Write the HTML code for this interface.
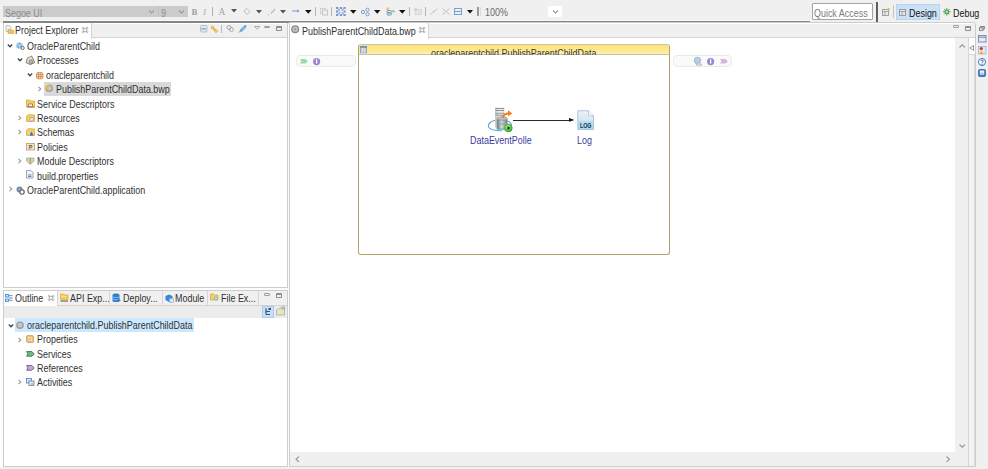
<!DOCTYPE html>
<html><head><meta charset="utf-8">
<style>
*{margin:0;padding:0;box-sizing:border-box}
html,body{width:988px;height:469px;overflow:hidden;background:#f0f0f0;font-family:"Liberation Sans",sans-serif;font-size:10.4px;color:#303030}
.a{position:absolute}
.t{position:absolute;white-space:nowrap;line-height:12px;font-size:10.4px;transform:scaleX(0.86);transform-origin:0 0}
svg{position:absolute;overflow:visible}
.ch{fill:none;stroke:#444;stroke-width:1.3}
.cr{fill:none;stroke:#9a9a9a;stroke-width:1.1}
.dd{fill:#111}
.sep{position:absolute;width:1px;background:#b4b4b4}
</style></head><body>

<div class="a" style="left:0;top:23px;width:289px;height:444px;background:#fcfcfc"></div>
<!-- ===== TOP TOOLBAR ===== -->
<div class="a" style="left:3px;top:6px;width:155px;height:11px;background:#cbcbcb"></div>
<div class="t" style="left:5px;top:7.5px;color:#8c8c8c">Segoe UI</div>
<svg style="left:148px;top:10px" width="8" height="5"><polyline points="1,0.5 3.5,3 6,0.5" class="cr"/></svg>
<div class="a" style="left:158px;top:6px;width:30px;height:11px;background:#cbcbcb;border-left:1px solid #c0c0c0"></div>
<div class="t" style="left:161px;top:7.5px;color:#8c8c8c">9</div>
<svg style="left:178px;top:10px" width="8" height="5"><polyline points="1,0.5 3.5,3 6,0.5" class="cr"/></svg>

<div class="a" style="left:191.5px;top:7px;font:bold 9px 'Liberation Serif',serif;color:#a0a0a0">B</div>
<div class="a" style="left:203px;top:7px;font:italic 9px 'Liberation Serif',serif;color:#ababab">I</div>
<div class="sep" style="left:212px;top:7px;height:9px;background:#b0b0b0"></div>
<div class="a" style="left:218.5px;top:7px;font:9.5px 'Liberation Serif',serif;color:#a4a4a4">A</div>
<svg style="left:231px;top:9px" width="7" height="4"><polygon points="0,0 6,0 3,3.5" fill="#555"/></svg>
<svg style="left:243px;top:8px" width="8" height="7"><path d="M1,3 L4,0.5 L7,3.5 L4,6.5 Z" fill="none" stroke="#bdbdbd" stroke-width="1"/></svg>
<svg style="left:256px;top:9.5px" width="7" height="4"><polygon points="0,0 6,0 3,3.5" fill="#555"/></svg>
<svg style="left:267px;top:8px" width="9" height="7"><path d="M1,6.5 L2,6.5 M4,5.5 L8,1" stroke="#bcbcbc" stroke-width="1.3" fill="none"/></svg>
<svg style="left:280px;top:9.5px" width="7" height="4"><polygon points="0,0 6,0 3,3.5" fill="#555"/></svg>
<svg style="left:292px;top:9px" width="8" height="4"><path d="M0,2 L6,2" stroke="#86a6d6" stroke-width="1.1"/><polygon points="5,0.3 8,2 5,3.7" fill="#86a6d6"/></svg>
<svg style="left:304.5px;top:9.5px" width="7" height="4"><polygon points="0,0 6.5,0 3.25,3.8" class="dd"/></svg>
<div class="sep" style="left:315px;top:7px;height:9px"></div>
<svg style="left:320px;top:8px" width="8" height="7"><rect x="0.5" y="0.5" width="5" height="5" fill="none" stroke="#cfcfcf"/><rect x="2.5" y="2" width="5" height="5" fill="#eee" stroke="#c8c8c8"/></svg>
<div class="sep" style="left:331px;top:7px;height:9px"></div>
<svg style="left:336px;top:7px" width="10" height="9"><g fill="#7896c6"><rect x="0" y="0" width="2.2" height="2"/><rect x="3.8" y="0" width="2.2" height="2"/><rect x="7.5" y="0" width="2.2" height="2"/><rect x="0" y="3.5" width="2.2" height="2"/><rect x="7.5" y="3.5" width="2.2" height="2"/><rect x="0" y="7" width="2.2" height="2"/><rect x="3.8" y="7" width="2.2" height="2"/><rect x="7.5" y="7" width="2.2" height="2"/></g><path d="M1,1 L8.5,8 M8.5,1 L1,8" stroke="#8aa7d2" stroke-width="1.6" opacity="0.85"/><circle cx="4.9" cy="4.5" r="1.2" fill="#f0f4fa"/></svg>
<svg style="left:349.5px;top:9.5px" width="7" height="4"><polygon points="0,0 6.5,0 3.25,3.8" class="dd"/></svg>
<svg style="left:361px;top:7.5px" width="9" height="8"><g fill="none" stroke="#7b9fd0" stroke-width="1"><circle cx="2" cy="4" r="1.6"/><circle cx="6.5" cy="1.8" r="1.6"/><circle cx="6.5" cy="6.2" r="1.6"/></g></svg>
<svg style="left:374px;top:9.5px" width="7" height="4"><polygon points="0,0 6.5,0 3.25,3.8" class="dd"/></svg>
<svg style="left:386px;top:7px" width="9" height="9"><circle cx="1.8" cy="1.6" r="1.4" fill="#e8c25a"/><circle cx="7.3" cy="4.2" r="1.3" fill="#8fd07a"/><g fill="none" stroke="#6f93c8" stroke-width="1"><rect x="1" y="3.5" width="4.5" height="2" rx="1"/><rect x="1" y="6" width="4.5" height="2" rx="1"/></g></svg>
<svg style="left:399px;top:9.5px" width="7" height="4"><polygon points="0,0 6.5,0 3.25,3.8" class="dd"/></svg>
<div class="sep" style="left:409px;top:7px;height:9px"></div>
<svg style="left:414px;top:8px" width="8" height="7"><rect x="1.5" y="1.5" width="6" height="5" fill="#e4e4e4" stroke="#d2d2d2" stroke-width="0.8"/><circle cx="1.5" cy="1.3" r="1" fill="none" stroke="#c4c4c4" stroke-width="0.8"/></svg>
<div class="sep" style="left:425px;top:7px;height:9px"></div>
<svg style="left:430px;top:8px" width="8" height="7"><path d="M0.5,6.5 L7.5,0.5 M3,3 L5,4" stroke="#c2c2c2" stroke-width="1" fill="none"/></svg>
<svg style="left:442px;top:8px" width="8" height="7"><path d="M0.5,0.5 L7.5,6.5 M7.5,0.5 L0.5,6.5" stroke="#c2c2c2" stroke-width="1" fill="none"/></svg>
<svg style="left:454px;top:8px" width="8" height="7"><rect x="0.5" y="0.5" width="7" height="6" fill="#e6f1fb" stroke="#7f9fc6" stroke-width="1"/><path d="M0.5,3.5 L7.5,3.5" stroke="#7f9fc6" stroke-width="1"/></svg>
<svg style="left:467px;top:9.5px" width="7" height="4"><polygon points="0,0 6,0 3,3.5" class="dd"/></svg>
<div class="sep" style="left:477px;top:7px;height:9px;width:1.5px;background:#9a9a9a"></div>
<div class="sep" style="left:480px;top:7px;height:9px;background:#dcdcdc"></div>
<div class="t" style="left:485px;top:7px;color:#6a6a6a">100%</div>
<div class="a" style="left:548px;top:6px;width:14px;height:11px;background:#fff"></div>
<svg style="left:552px;top:10px" width="8" height="5"><polyline points="1,0.5 3.5,3 6,0.5" class="cr"/></svg>

<!-- toolbar dark line -->
<div class="a" style="left:3px;top:20px;width:807px;height:1px;background:#f8f8f8"></div>
<div class="a" style="left:3px;top:21px;width:807px;height:2px;background:#858585"></div>

<!-- Quick access -->
<div class="a" style="left:812px;top:3px;width:61px;height:17px;background:#fff;border:1px solid #a4a4a4;border-radius:1px"></div>
<div class="t" style="left:814px;top:7.5px;color:#7a7a7a">Quick Access</div>
<div class="a" style="left:876px;top:2px;width:1.5px;height:20px;background:#5e5e5e"></div>
<svg style="left:882px;top:8px" width="8" height="8"><rect x="0.5" y="1.5" width="6" height="6" fill="#f2ead2" stroke="#8d9bb0" stroke-width="0.9"/><path d="M0.5,3.5 L6.5,3.5 M3,3.5 L3,7.5" stroke="#8d9bb0" stroke-width="0.8"/><circle cx="6.5" cy="1.2" r="1.2" fill="#e9b940"/></svg>
<div class="a" style="left:893px;top:5px;width:1px;height:13px;background:#c4c4c4"></div>
<div class="a" style="left:896px;top:4px;width:44px;height:16px;background:#c9e0f5;border:1px solid #b5d5f2"></div>
<svg style="left:899px;top:9px" width="7" height="7"><rect x="0.5" y="0.5" width="6" height="6" fill="#efe6cc" stroke="#8797ad" stroke-width="0.9"/><path d="M0.5,2.5 L6.5,2.5 M3,2.5 L3,6.5" stroke="#8797ad" stroke-width="0.8"/></svg>
<div class="t" style="left:908.5px;top:8px;color:#151515">Design</div>
<svg style="left:942.5px;top:8px" width="8" height="8"><g fill="#4f9e5a"><circle cx="3.8" cy="3.8" r="2.4"/></g><g stroke="#4f9e5a" stroke-width="1"><path d="M3.8,0 L3.8,7.6 M0,3.8 L7.6,3.8 M1.1,1.1 L6.5,6.5 M6.5,1.1 L1.1,6.5"/></g><circle cx="3.8" cy="3.8" r="1.1" fill="#d7f0c8"/></svg>
<div class="t" style="left:952.5px;top:8px;color:#151515">Debug</div>

<!-- ===== PROJECT EXPLORER ===== -->
<div class="a" style="left:3px;top:23px;width:285px;height:265px;background:#fff;border:1px solid #cdcdcd;border-top:none"></div>
<div class="a" style="left:4px;top:24px;width:283px;height:14px;background:#f0f0f0;border-bottom:1px solid #d4d4d4"></div>
<div class="a" style="left:4px;top:23px;width:88px;height:16px;background:#fff;border-right:1px solid #d4d4d4"></div>
<svg style="left:4.5px;top:25px" width="10" height="9"><path d="M1,0.5 L4.5,0.5 L6,2 L6,6.5 L1,6.5 Z" fill="#eef2f7" stroke="#a9b6c6" stroke-width="0.8"/><path d="M3,4.5 L5.2,4.5 L6,5.3 L8.8,5.3 L8.8,8.5 L3,8.5 Z" fill="#f3c35a" stroke="#d9a13a" stroke-width="0.6" stroke-linejoin="round"/></svg>
<div class="t" style="left:15px;top:25.3px">Project Explorer</div>
<svg style="left:81.8px;top:26.8px" width="7" height="7"><g fill="none" stroke="#acacac" stroke-width="0.8"><rect x="1.6" y="1.6" width="3" height="2.8"/><circle cx="1.2" cy="1.2" r="1"/><circle cx="5" cy="1.2" r="1"/><circle cx="1.2" cy="4.8" r="1"/><circle cx="5" cy="4.8" r="1"/></g></svg>

<!-- PE toolbar -->
<svg style="left:199.5px;top:25px" width="8" height="8"><rect x="0.5" y="0.5" width="6.5" height="6.5" rx="1" fill="#dde7f1" stroke="#a9bdd3" stroke-width="0.9"/><path d="M1.5,3.8 L6,3.8" stroke="#7f9fc4" stroke-width="1.3"/><path d="M1.5,2.2 L6,2.2" stroke="#f6f9fc" stroke-width="0.8"/></svg>
<svg style="left:210px;top:24.5px" width="9" height="9"><g fill="#e6b440"><path d="M2.5,0.3 L4.7,2.5 L2.5,4.7 L0.3,2.5 Z"/><path d="M6,3.8 L8.3,6 L6,8.3 L3.8,6 Z"/></g><path d="M3,3 L5.5,5.5" stroke="#d9a030" stroke-width="1.3"/><g fill="#fbe9a8"><circle cx="2.5" cy="2.5" r="0.8"/><circle cx="6" cy="6" r="0.8"/></g></svg>
<div class="a" style="left:221px;top:24.5px;width:1px;height:8px;background:#b8b8b8"></div>
<svg style="left:226px;top:25px" width="9" height="7"><g fill="none" stroke="#a0a0a0" stroke-width="0.9"><circle cx="3" cy="2.5" r="2"/><circle cx="5.5" cy="4.5" r="2"/></g></svg>
<svg style="left:238px;top:24.5px" width="9" height="9"><path d="M2.8,5.8 L7.2,1.4" stroke="#5f9be0" stroke-width="2.6" stroke-linecap="round"/><path d="M3.5,4.8 L6.8,1.6" stroke="#d4e6fa" stroke-width="0.7"/><path d="M0.6,7.8 L2.2,5.8" stroke="#f0d050" stroke-width="1.6"/></svg>
<svg style="left:254px;top:25.5px" width="7" height="4"><polygon points="0.5,0.5 6,0.5 3.25,3" fill="none" stroke="#9a9a9a" stroke-width="0.8"/></svg>
<div class="a" style="left:264px;top:25.5px;width:6px;height:2.5px;border:1px solid #9d9d9d;border-radius:1px"></div>
<div class="a" style="left:276px;top:25.5px;width:6px;height:5px;border:1px solid #8d8d8d;border-top-width:2px;border-radius:1px"></div>

<!-- PE tree -->
<svg style="left:7px;top:43.5px" width="6" height="4"><polyline points="0.8,0.5 3,2.8 5.2,0.5" class="ch"/></svg>
<svg style="left:15.5px;top:41.5px" width="10" height="9"><path d="M0.5,1.8 L3.5,0.3 L6.5,1.8 L6.5,5.5 L3.5,7 L0.5,5.5 Z" fill="#7db3e2"/><path d="M0.5,1.8 L3.5,3.3 L6.5,1.8 M3.5,3.3 L3.5,7" stroke="#e0eef9" stroke-width="0.6" fill="none"/><circle cx="6.6" cy="6" r="1.6" fill="#fff" stroke="#666" stroke-width="1"/></svg>
<div class="t" style="left:26.5px;top:41px">OracleParentChild</div>

<svg style="left:17px;top:58px" width="6" height="4"><polyline points="0.8,0.5 3,2.8 5.2,0.5" class="ch"/></svg>
<svg style="left:25.3px;top:55.6px" width="10" height="10"><path d="M0.8,4.8 L3.8,1.3 L8.6,1.3 L8.6,8.3 L3.8,8.3 Z" fill="#efe6cf" stroke="#858585" stroke-width="1" stroke-linejoin="round" transform="rotate(-25 5 5)"/><circle cx="5.8" cy="5.6" r="1.9" fill="#a4a4a4" stroke="#777" stroke-width="0.6"/><circle cx="5.8" cy="5.6" r="0.7" fill="#e8e8e8"/></svg>
<div class="t" style="left:36.5px;top:55.4px">Processes</div>

<svg style="left:27px;top:72.5px" width="6" height="4"><polyline points="0.8,0.5 3,2.8 5.2,0.5" class="ch"/></svg>
<svg style="left:36.3px;top:71.5px" width="8" height="8"><rect x="0.5" y="0.5" width="6.5" height="6.3" rx="1.6" fill="#f6e2c8" stroke="#d08a48" stroke-width="0.8"/><path d="M0.5,2.6 L7,2.6 M0.5,4.7 L7,4.7 M2.6,0.5 L2.6,6.8 M4.9,0.5 L4.9,6.8" stroke="#cf8240" stroke-width="0.8"/></svg>
<div class="t" style="left:46px;top:69.8px">oracleparentchild</div>

<div class="a" style="left:44px;top:82px;width:127px;height:14px;background:#d9d9d9"></div>
<svg style="left:38px;top:86px" width="4" height="6"><polyline points="0.5,0.8 2.8,3 0.5,5.2" class="cr"/></svg>
<svg style="left:45px;top:84px" width="9" height="9"><circle cx="4.2" cy="4.2" r="3.8" fill="#9e9e9e"/><circle cx="4.2" cy="4.2" r="2.4" fill="#c9c9c9"/><path d="M0.5,1.5 L4,0.5 L5,3 L1.5,5.5 Z" fill="#e7c12e"/></svg>
<div class="t" style="left:55.5px;top:84.2px">PublishParentChildData.bwp</div>

<svg style="left:25.5px;top:99px" width="9" height="9"><path d="M0.5,1 L3.5,1 L4.5,2 L8.5,2 L8.5,8 L0.5,8 Z" fill="#f4cf5a" stroke="#d0a030" stroke-width="0.7"/><path d="M2.5,5 L6.5,5 L6.5,7.5 L2.5,7.5 Z" fill="#fff" stroke="#6a6a6a" stroke-width="0.7"/><path d="M1,8 L8.5,8" stroke="#c0702a" stroke-width="1"/></svg>
<div class="t" style="left:36.5px;top:98.6px">Service Descriptors</div>

<svg style="left:18px;top:114.6px" width="4" height="6"><polyline points="0.5,0.8 2.8,3 0.5,5.2" class="cr"/></svg>
<svg style="left:25.5px;top:113.5px" width="9" height="8"><path d="M0.5,2 L3,0.5 L8.5,1 L8.5,7.5 L0.5,7.5 Z" fill="#f4d067" stroke="#d5a53a" stroke-width="0.7"/><rect x="4" y="3.5" width="3.5" height="3.5" fill="#e8e8e8" stroke="#888" stroke-width="0.5"/></svg>
<div class="t" style="left:36.5px;top:113px">Resources</div>

<svg style="left:18px;top:129px" width="4" height="6"><polyline points="0.5,0.8 2.8,3 0.5,5.2" class="cr"/></svg>
<svg style="left:25.5px;top:128px" width="9" height="8"><path d="M0.5,2 L3,0.5 L8.5,1 L8.5,7.5 L0.5,7.5 Z" fill="#f4d067" stroke="#d5a53a" stroke-width="0.7"/><path d="M3.5,7.5 L5.5,3.5 L7.5,7.5 Z" fill="#2f6fd0"/></svg>
<div class="t" style="left:36.5px;top:127.4px">Schemas</div>

<svg style="left:25.5px;top:142.5px" width="9" height="8"><rect x="0.5" y="0.5" width="8" height="6.5" fill="#f1e3cc" stroke="#b89a70" stroke-width="0.8"/><text x="2.8" y="6" font-size="5.5" font-family="Liberation Sans" font-weight="bold" fill="#6a4a20">P</text></svg>
<div class="t" style="left:36.5px;top:141.8px">Policies</div>

<svg style="left:18px;top:158px" width="4" height="6"><polyline points="0.5,0.8 2.8,3 0.5,5.2" class="cr"/></svg>
<svg style="left:25.5px;top:156.5px" width="9" height="8"><path d="M0.5,1 L8,1 L8,4 L4.25,7.5 L0.5,4 Z" fill="#f0d070" stroke="#8fb0d0" stroke-width="0.8"/><path d="M4.25,1 L4.25,7" stroke="#6f9fd0" stroke-width="1"/></svg>
<div class="t" style="left:36.5px;top:156.2px">Module Descriptors</div>

<svg style="left:26px;top:170px" width="8" height="9"><path d="M0.5,0.5 L5,0.5 L7,2.5 L7,8 L0.5,8 Z" fill="#f4f4f4" stroke="#8a8fa0" stroke-width="0.8"/><path d="M2,5 L5.5,5 M2,6.5 L5.5,6.5" stroke="#3a6fb5" stroke-width="0.8"/></svg>
<div class="t" style="left:36.5px;top:170.6px">build.properties</div>

<svg style="left:8.5px;top:186.2px" width="4" height="6"><polyline points="0.5,0.8 2.8,3 0.5,5.2" class="cr"/></svg>
<svg style="left:16px;top:185.5px" width="9" height="9"><circle cx="3.5" cy="3.5" r="3" fill="#5b8fc8"/><circle cx="3.5" cy="3.5" r="1.2" fill="#f0b050"/><circle cx="6" cy="6" r="2.2" fill="#fff" stroke="#555" stroke-width="1.1"/></svg>
<div class="t" style="left:26.5px;top:185px">OracleParentChild.application</div>

<!-- ===== OUTLINE ===== -->
<div class="a" style="left:3px;top:290px;width:285px;height:177px;background:#fff;border:1px solid #cdcdcd"></div>
<div class="a" style="left:4px;top:291px;width:283px;height:15px;background:#f0f0f0;border-bottom:1px solid #d4d4d4"></div>
<div class="a" style="left:4px;top:291px;width:54px;height:16px;background:#fff;border-right:1px solid #d4d4d4"></div>
<div class="a" style="left:4px;top:306px;width:283px;height:12px;background:#ececec"></div>
<svg style="left:5px;top:293.5px" width="8" height="9"><g fill="#cfe3f7" stroke="#3d7fd0" stroke-width="0.8"><rect x="0.5" y="0.5" width="3" height="2.5"/><rect x="0.5" y="5" width="3" height="2.5"/></g><path d="M4,1.7 L7.5,1.7 M4,4 L7.5,4 M4,6.2 L7.5,6.2" stroke="#3d7fd0" stroke-width="0.9"/></svg>
<div class="t" style="left:15px;top:293px">Outline</div>
<svg style="left:48.2px;top:294.6px" width="7" height="7"><g fill="none" stroke="#acacac" stroke-width="0.8"><rect x="1.6" y="1.6" width="3" height="2.8"/><circle cx="1.2" cy="1.2" r="1"/><circle cx="5" cy="1.2" r="1"/><circle cx="1.2" cy="4.8" r="1"/><circle cx="5" cy="4.8" r="1"/></g></svg>
<svg style="left:60px;top:293.3px" width="10" height="10"><path d="M0.5,1 L3.5,1 L4.5,2 L8,2 L8,6.3 L0.5,6.3 Z" fill="#f4cf5a" stroke="#d8a838" stroke-width="0.7"/><path d="M1.5,3.5 L6,3.5" stroke="#fbe6a0" stroke-width="0.8"/><path d="M0.5,8 L8,8" stroke="#4a5f80" stroke-width="1.1"/><rect x="3.5" y="6.8" width="1.6" height="2.3" fill="#e89a30"/></svg>
<div class="t" style="left:69.5px;top:293px">API Exp...</div>
<div class="a" style="left:109px;top:291px;width:1px;height:14px;background:#d6d6d6"></div>
<svg style="left:111.5px;top:293px" width="10" height="10"><path d="M0.5,2 C0.5,0 7.5,0 7.5,2 L7.5,8 C7.5,9.3 0.5,9.3 0.5,8 Z" fill="#2f7fd0"/><path d="M0.5,3.8 C1,4.8 7,4.8 7.5,3.8 M0.5,6 C1,7 7,7 7.5,6" stroke="#a8d0f4" stroke-width="0.7" fill="none"/><path d="M6,5.5 L9,7.2 L6,9 Z" fill="#2f7fd0"/></svg>
<div class="t" style="left:123px;top:293px">Deploy...</div>
<div class="a" style="left:162px;top:291px;width:1px;height:14px;background:#d6d6d6"></div>
<svg style="left:164.5px;top:293.5px" width="9" height="9"><path d="M0.5,2 L4,0.5 L7.5,2 L7.5,6 L4,8 L0.5,6 Z" fill="#3a86d6"/><rect x="4.5" y="4.5" width="4" height="4" fill="#d6e6f6" stroke="#7fa8d6" stroke-width="0.6"/></svg>
<div class="t" style="left:175px;top:293px">Module</div>
<div class="a" style="left:207px;top:291px;width:1px;height:14px;background:#d6d6d6"></div>
<svg style="left:210px;top:293px" width="9" height="9"><path d="M0.5,1 L3.5,1 L4.5,2 L8,2 L8,7 L0.5,7 Z" fill="#f4d067" stroke="#d5a53a" stroke-width="0.7"/><circle cx="6" cy="5.5" r="1.6" fill="#cfeef8" stroke="#3aa0c8" stroke-width="0.6"/></svg>
<div class="t" style="left:220.5px;top:293px">File Ex...</div>
<div class="a" style="left:258px;top:291px;width:1px;height:14px;background:#d6d6d6"></div>
<div class="a" style="left:264px;top:293px;width:6px;height:2.5px;border:1px solid #9d9d9d;border-radius:1px"></div>
<div class="a" style="left:276px;top:293px;width:6px;height:5px;border:1px solid #8d8d8d;border-top-width:2px;border-radius:1px"></div>
<!-- outline toolbar -->
<div class="a" style="left:262px;top:306px;width:12px;height:12px;background:#c8e0f6;border:1px solid #a9cbed"></div>
<svg style="left:265px;top:308px" width="7" height="8"><path d="M1,0.5 L1,6.5 M1,3.5 L5,3.5 M1,6.5 L5,6.5" stroke="#2f4f8f" stroke-width="1.2" fill="none"/><rect x="3.5" y="0" width="2.5" height="2" fill="#2f4f8f"/></svg>
<svg style="left:276px;top:306px" width="10" height="10"><path d="M0.5,4 L4,2 L8.5,2 L8.5,9 L0.5,9 Z" fill="#e8e4c8" stroke="#a6a6a6" stroke-width="0.7"/><rect x="5.5" y="0.5" width="3.5" height="3" fill="#7fb0c8"/><rect x="6" y="1" width="2" height="2" fill="#e8c850"/></svg>

<!-- outline tree -->
<div class="a" style="left:15px;top:318px;width:179px;height:14px;background:#cce8ff"></div>
<svg style="left:7.5px;top:323.5px" width="6" height="4"><polyline points="0.8,0.5 3,2.8 5.2,0.5" class="ch"/></svg>
<svg style="left:15.5px;top:320.5px" width="9" height="9"><circle cx="4" cy="4.2" r="3.8" fill="#9a9a9a"/><circle cx="4" cy="4.2" r="2.4" fill="#c8c8c8"/></svg>
<div class="t" style="left:26.5px;top:320px">oracleparentchild.PublishParentChildData</div>
<svg style="left:18.3px;top:336.5px" width="4" height="6"><polyline points="0.5,0.8 2.8,3 0.5,5.2" class="cr"/></svg>
<svg style="left:26px;top:334.5px" width="8" height="8"><rect x="0.5" y="0.5" width="7" height="7" rx="1.2" fill="#e9bf78" stroke="#c9994e" stroke-width="0.7"/><path d="M2,2 L6,2 L6,5.5 L2,5.5 Z" fill="#f6e2bc"/><path d="M2.5,4.5 L5.5,3" stroke="#c08838" stroke-width="0.7"/></svg>
<div class="t" style="left:36.5px;top:334px">Properties</div>
<svg style="left:25.5px;top:350.8px" width="9" height="6"><path d="M0.6,0.6 L5.8,0.6 L8.2,2.9 L5.8,5.2 L0.6,5.2 L2,2.9 Z" fill="#6cc07e" stroke="#3e5a44" stroke-width="0.8"/></svg>
<div class="t" style="left:36.5px;top:349px">Services</div>
<svg style="left:25.5px;top:365.2px" width="9" height="6"><path d="M0.6,0.6 L5.8,0.6 L8.2,2.9 L5.8,5.2 L0.6,5.2 L2,2.9 Z" fill="#d0a8de" stroke="#5a4a62" stroke-width="0.8"/></svg>
<div class="t" style="left:36.5px;top:363px">References</div>
<svg style="left:18.3px;top:379px" width="4" height="6"><polyline points="0.5,0.8 2.8,3 0.5,5.2" class="cr"/></svg>
<svg style="left:26px;top:378px" width="9" height="8"><rect x="0.5" y="0.5" width="5" height="4.5" fill="#d8e8f8" stroke="#4a7fc0" stroke-width="0.8"/><rect x="3" y="3" width="5" height="4.5" fill="#e6f0fa" stroke="#4a7fc0" stroke-width="0.8"/><rect x="5" y="5" width="2.5" height="2" fill="#e8c040"/></svg>
<div class="t" style="left:36.5px;top:377px">Activities</div>

<!-- ===== EDITOR ===== -->
<div class="a" style="left:289px;top:22px;width:687px;height:445px;background:#fff;border:1px solid #cdcdcd;border-top-right-radius:3px"></div>
<div class="a" style="left:290px;top:24px;width:685px;height:14px;background:#f0f0f0;border-bottom:1px solid #d4d4d4"></div>
<div class="a" style="left:290px;top:23px;width:139px;height:16px;background:#fff;border-right:1px solid #d4d4d4"></div>
<svg style="left:291px;top:25px" width="9" height="9"><circle cx="4.2" cy="4.2" r="4" fill="#8a8a8a"/><circle cx="4.2" cy="4.2" r="2.6" fill="#cacaca"/><circle cx="4.2" cy="4.2" r="1.2" fill="#9a9a9a"/></svg>
<div class="t" style="left:301.5px;top:26px">PublishParentChildData.bwp</div>
<svg style="left:419px;top:26.8px" width="7" height="7"><g fill="none" stroke="#acacac" stroke-width="0.8"><rect x="1.6" y="1.6" width="3" height="2.8"/><circle cx="1.2" cy="1.2" r="1"/><circle cx="5" cy="1.2" r="1"/><circle cx="1.2" cy="4.8" r="1"/><circle cx="5" cy="4.8" r="1"/></g></svg>
<div class="a" style="left:953px;top:25px;width:6px;height:2.5px;border:1px solid #9d9d9d;border-radius:1px"></div>
<div class="a" style="left:965px;top:25.5px;width:6px;height:5px;border:1px solid #8d8d8d;border-top-width:2px;border-radius:1px"></div>

<!-- scrollbars -->
<div class="a" style="left:955px;top:38px;width:13px;height:415px;background:#f0f0f0"></div>
<svg style="left:958.5px;top:44px" width="7" height="4"><polyline points="0.5,3.5 3.25,0.8 6,3.5" class="cr"/></svg>
<svg style="left:958.5px;top:443.5px" width="7" height="4"><polyline points="0.5,0.5 3.25,3.2 6,0.5" class="cr"/></svg>
<div class="a" style="left:290px;top:452px;width:665px;height:14px;background:#f0f0f0"></div>
<svg style="left:295px;top:456px" width="5" height="7"><polyline points="4,0.5 1,3.25 4,6" class="cr"/></svg>
<svg style="left:945.5px;top:456px" width="5" height="7"><polyline points="0.5,0.5 3.5,3.25 0.5,6" class="cr"/></svg>
<div class="a" style="left:955px;top:452px;width:13px;height:14px;background:#f0f0f0"></div>
<div class="a" style="left:968px;top:38px;width:7px;height:428px;background:#f2f2f2;border-left:1px solid #d6d6d6;border-right:1px solid #dadada"></div>
<div class="a" style="left:969px;top:38px;width:6px;height:17px;background:#fff;border-bottom:1px solid #d6d6d6"></div>
<svg style="left:969px;top:45px" width="5" height="6"><polygon points="4.5,0.5 0.8,3 4.5,5.5" fill="none" stroke="#8a8a8a" stroke-width="0.9"/></svg>

<!-- right trim -->
<svg style="left:979px;top:25.5px" width="6" height="5"><rect x="1.8" y="0.5" width="3.5" height="2.5" fill="none" stroke="#777" stroke-width="0.9"/><rect x="0.5" y="1.8" width="3.5" height="2.5" fill="#f0f0f0" stroke="#777" stroke-width="0.9"/></svg>
<svg style="left:977.5px;top:35px" width="9" height="8"><rect x="0.5" y="0.5" width="7.5" height="6.5" fill="#e6eaf2" stroke="#6f86aa" stroke-width="0.9"/><path d="M0.5,2.2 L8,2.2" stroke="#6f86aa" stroke-width="1"/></svg>
<svg style="left:977.5px;top:46px" width="9" height="9"><rect x="0.5" y="0.5" width="7.5" height="7.5" fill="#dce8f4" stroke="#8aa6c6" stroke-width="0.6"/><circle cx="3.3" cy="2.6" r="1.6" fill="#e03030"/><path d="M1.2,8 L3.3,4.8 L5.4,8 Z" fill="#f0b020"/></svg>
<svg style="left:977.5px;top:57.5px" width="9" height="9"><circle cx="4" cy="4" r="3.6" fill="#f4f8fc" stroke="#4a7fc0" stroke-width="1"/><path d="M2.8,3 C2.8,1.6 5.3,1.6 5.3,3 C5.3,4 4,4 4,5.2" fill="none" stroke="#3a6fb5" stroke-width="0.9"/><circle cx="4" cy="6.4" r="0.55" fill="#3a6fb5"/></svg>
<svg style="left:978px;top:69px" width="8" height="8"><rect x="0.5" y="0.5" width="7" height="7" rx="1.2" fill="#3f78c0" stroke="#2a5a9a" stroke-width="0.7"/><rect x="1.8" y="1.5" width="4.4" height="4.2" fill="#eef3f9"/><path d="M2.5,4.3 L5.5,4.3" stroke="#3f78c0" stroke-width="0.6"/></svg>

<!-- process box -->
<div class="a" style="left:357.5px;top:43.5px;width:312.5px;height:211.5px;border:1.4px solid #b2a26c;border-top-color:#c9c3ae;border-radius:3px;background:#fff"></div>
<div class="a" style="left:358.8px;top:44.8px;width:310px;height:10.5px;background:linear-gradient(#fde47c,#fde88a 55%,#fdf1b0);border-bottom:1px solid #c4bfae;border-radius:2px 2px 0 0"></div>
<svg style="left:360.3px;top:46.2px" width="7" height="7"><rect x="0.3" y="0.3" width="6.4" height="6.6" fill="#b9cbe3" stroke="#7d93b5" stroke-width="0.6"/><rect x="0.3" y="0.3" width="6.4" height="1.4" fill="#4b84cc"/><path d="M2.5,1.8 L2.5,6.8 M4.6,1.8 L4.6,6.8" stroke="#e8f0fa" stroke-width="0.7"/></svg>
<div class="a" style="left:420px;top:45px;width:200px;height:10px;overflow:hidden">
<div class="t" style="left:11px;top:3px;color:#3a3a3a">oracleparentchild.PublishParentChildData</div>
</div>

<!-- pills -->
<div class="a" style="left:296px;top:55px;width:59.5px;height:12px;background:#f9fbf8;border:1px solid #e8ece6;border-radius:4px"></div>
<svg style="left:300px;top:59px" width="8" height="5"><path d="M0,0 L5.5,0 L8,2.3 L5.5,4.6 L0,4.6 L1.5,2.3 Z" fill="#9bd8ad"/></svg>
<svg style="left:313px;top:57.5px" width="8" height="8"><circle cx="3.6" cy="3.6" r="3.6" fill="#9a86d2"/><path d="M3.6,2.2 L3.6,5.6" stroke="#fff" stroke-width="1.3"/><circle cx="3.6" cy="1.4" r="0.6" fill="#fff"/></svg>
<div class="a" style="left:672.5px;top:55px;width:59.5px;height:12px;background:#f9fbf8;border:1px solid #e8ece6;border-radius:4px"></div>
<svg style="left:694px;top:57px" width="9" height="9"><circle cx="3.5" cy="3.5" r="3.3" fill="#b8cde6" stroke="#8aa8c8" stroke-width="0.6"/><path d="M2.5,8 C2.5,5.5 6,5 7.5,8 Z" fill="#fff" stroke="#999" stroke-width="0.8"/></svg>
<svg style="left:707px;top:57.5px" width="8" height="8"><circle cx="3.6" cy="3.6" r="3.6" fill="#9a86d2"/><path d="M3.6,2.2 L3.6,5.6" stroke="#fff" stroke-width="1.3"/><circle cx="3.6" cy="1.4" r="0.6" fill="#fff"/></svg>
<svg style="left:720px;top:59px" width="8" height="5"><path d="M0,0 L5.5,0 L8,2.3 L5.5,4.6 L0,4.6 L1.5,2.3 Z" fill="#d7b3e0"/></svg>

<!-- DataEventPoller icon -->
<svg style="left:486px;top:104px" width="30" height="30">
  <defs><linearGradient id="srv" x1="0" x2="1"><stop offset="0" stop-color="#c8c8c8"/><stop offset="0.5" stop-color="#f4f4f4"/><stop offset="1" stop-color="#d8d8d8"/></linearGradient>
  <linearGradient id="db" x1="0" x2="1"><stop offset="0" stop-color="#6e6e6e"/><stop offset="0.45" stop-color="#d8d8d8"/><stop offset="1" stop-color="#777"/></linearGradient>
  <radialGradient id="gr" cx="0.4" cy="0.35" r="0.7"><stop offset="0" stop-color="#b6f07a"/><stop offset="1" stop-color="#2fa02f"/></radialGradient></defs>
  <path d="M10,16 C3,17.5 1.5,21 3,23.5 C5,26.5 13,27 16,26.5 M21,17 C25,18 26,21 25,23" fill="none" stroke="#5b9fdc" stroke-width="1.1"/>
  <rect x="9" y="3.5" width="9.5" height="20" fill="url(#srv)"/>
  <path d="M9.5,4.5 L18,4.5 M9.5,6.5 L18,6.5 M9.5,9.3 L18,9.3 M9.5,11.2 L18,11.2" stroke="#8a8a8a" stroke-width="0.9"/>
  <path d="M15,9.5 L17,9.5" stroke="#7fd0e8" stroke-width="1"/>
  <path d="M10.8,14.5 L10.8,24.8 C10.8,26.8 21.4,26.8 21.4,24.8 L21.4,14.5 Z" fill="url(#db)"/>
  <ellipse cx="16.1" cy="14.5" rx="5.3" ry="1.8" fill="#bdbdbd" stroke="#7a7a7a" stroke-width="0.5"/>
  <path d="M10.8,19 C11,20.3 21.2,20.3 21.4,19 M10.8,24 C11,25.3 21.2,25.3 21.4,24" stroke="#3fc0c8" stroke-width="1.2" fill="none"/>
  <path d="M17,13.5 C17.5,10.5 20,9.5 23,9.5" stroke="#f07a1a" stroke-width="1.8" fill="none"/>
  <polygon points="22,6.3 26.3,9.5 22,12.3" fill="#ff7a10"/>
  <circle cx="22.4" cy="24" r="3.9" fill="url(#gr)" stroke="#3a9a3a" stroke-width="0.5"/>
  <polygon points="21.5,22.2 24.2,24 21.5,25.8" fill="#1a1a1a"/>
</svg>
<!-- connector -->
<div class="a" style="left:513px;top:119.6px;width:57px;height:1.1px;background:#2a2a2a"></div>
<svg style="left:568.5px;top:118.2px" width="6" height="4"><polygon points="0,0 5.5,1.9 0,3.8" fill="#111"/></svg>
<!-- Log icon -->
<svg style="left:576.5px;top:109.5px" width="18" height="21">
  <defs><linearGradient id="lg" x1="0" y1="0" x2="0" y2="1"><stop offset="0" stop-color="#eef4fb"/><stop offset="0.55" stop-color="#d6e4f2"/><stop offset="0.56" stop-color="#b4e0f4"/><stop offset="1" stop-color="#a6daf2"/></linearGradient></defs>
  <path d="M0.8,0.8 L11.5,0.8 L16.5,5.8 L16.5,19.5 L0.8,19.5 Z" fill="url(#lg)" stroke="#a9bfd4" stroke-width="0.9" stroke-linejoin="round"/>
  <path d="M11.5,0.8 L11.5,5.8 L16.5,5.8" fill="#f6f9fc" stroke="#a9bfd4" stroke-width="0.8"/>
  <path d="M2,4 L10,4 M2,6.5 L14,6.5 M2,9 L14,9" stroke="#dde8f3" stroke-width="1"/>
  <text x="3" y="17.6" font-size="6.6" font-family="Liberation Sans" font-weight="bold" fill="#0f2f48" textLength="11.5" lengthAdjust="spacingAndGlyphs">LOG</text>
</svg>

<div class="t" style="left:470px;top:135px;color:#3a3a9a">DataEventPolle</div>
<div class="t" style="left:577px;top:135px;color:#3a3a9a">Log</div>

</body></html>
